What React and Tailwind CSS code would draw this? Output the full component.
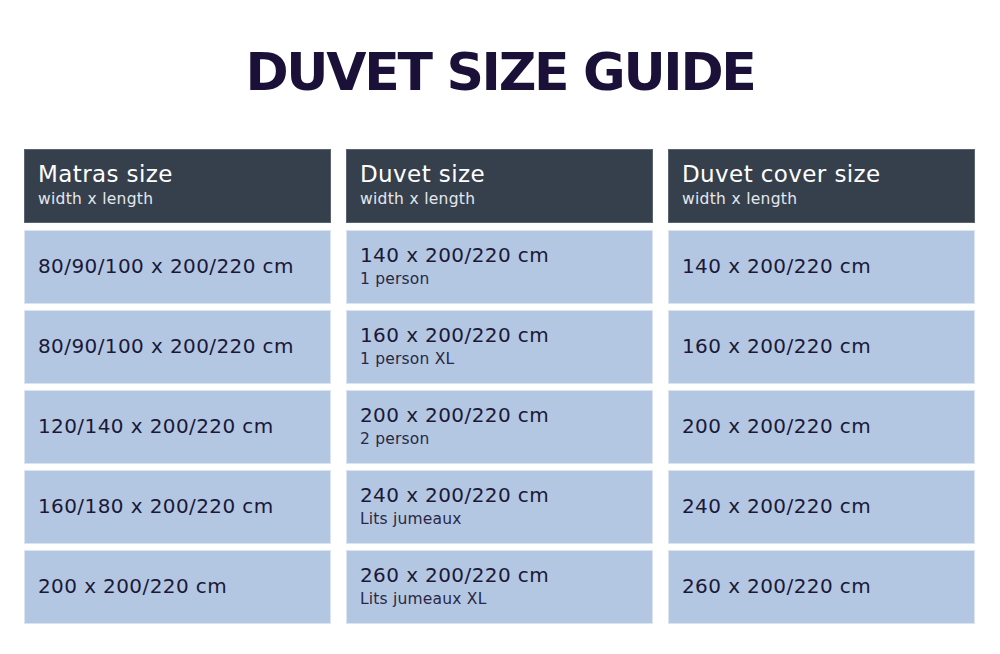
import React from 'react';

const columns = [
  {
    title: "Matras size",
    rows: [
      { main: "80/90/100 x 200/220 cm" },
      { main: "80/90/100 x 200/220 cm" },
      { main: "120/140 x 200/220 cm" },
      { main: "160/180 x 200/220 cm" },
      { main: "200 x 200/220 cm" },
    ],
  },
  {
    title: "Duvet size",
    rows: [
      { main: "140 x 200/220 cm", sub: "1 person" },
      { main: "160 x 200/220 cm", sub: "1 person XL" },
      { main: "200 x 200/220 cm", sub: "2 person" },
      { main: "240 x 200/220 cm", sub: "Lits jumeaux" },
      { main: "260 x 200/220 cm", sub: "Lits jumeaux XL" },
    ],
  },
  {
    title: "Duvet cover size",
    rows: [
      { main: "140 x 200/220 cm" },
      { main: "160 x 200/220 cm" },
      { main: "200 x 200/220 cm" },
      { main: "240 x 200/220 cm" },
      { main: "260 x 200/220 cm" },
    ],
  },
];

const App = () => {
  return (
    <div className="w-[1000px] h-[654px] bg-white font-['DejaVu_Sans',sans-serif] overflow-hidden">
      <h1 className="pt-[40px] text-center text-[52px] leading-[64px] font-bold tracking-[-2.3px] text-[#1a1038]">
        DUVET SIZE GUIDE
      </h1>
      <div className="mt-[45px] ml-[24px] flex gap-[15px]">
        {columns.map((col) => (
          <div key={col.title} className="w-[307px] flex flex-col gap-[6px]">
            <div className="h-[74px] mb-[1px] bg-[#36404d] border border-[#5a6370] px-[13px] pt-[10px] text-white">
              <div className="text-[23px] leading-[28px] tracking-[0.4px]">{col.title}</div>
              <div className="mt-[2px] text-[15.5px] leading-[18px] tracking-[0.3px] text-[#e4e7ec]">width x length</div>
            </div>
            {col.rows.map((row, i) => (
              <div
                key={i}
                className="h-[74px] bg-[#b3c7e2] border border-[#dbe4f1] px-[13px] pb-[3px] flex flex-col justify-center text-[#1c1838]"
              >
                <div className="text-[20px] leading-[26px] tracking-[0.4px]">{row.main}</div>
                {row.sub && <div className="mt-[1px] text-[15.5px] leading-[20px] tracking-[0.2px] text-[#2a2845]">{row.sub}</div>}
              </div>
            ))}
          </div>
        ))}
      </div>
    </div>
  );
};

export default App;
